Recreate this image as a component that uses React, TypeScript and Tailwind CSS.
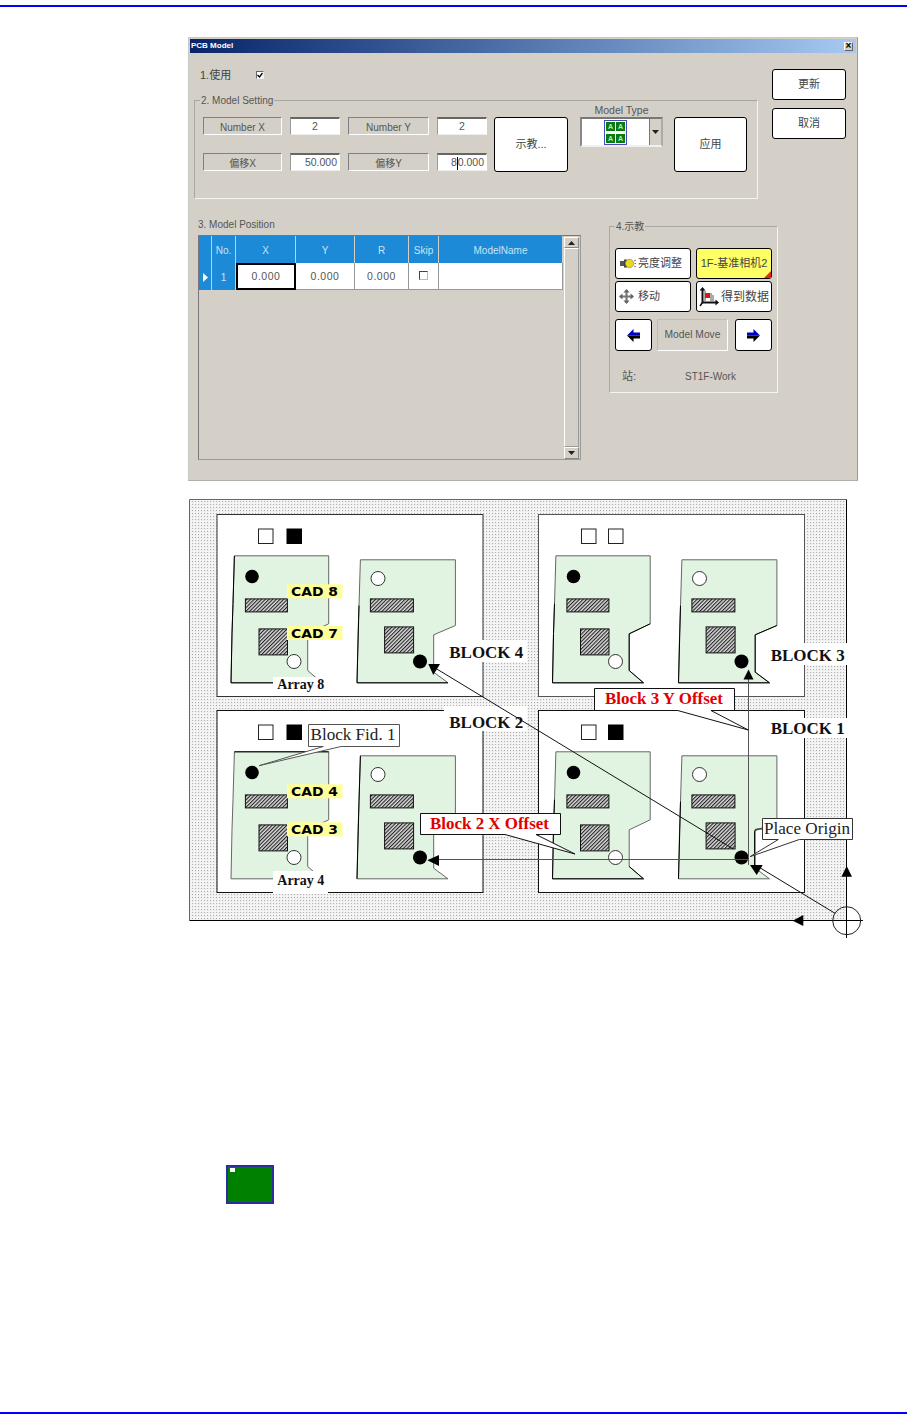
import React from 'react';

// --- Dialog pieces ---
const sunken = 'border border-t-[#808080] border-l-[#808080] border-r-white border-b-white';
const btnBase = 'flex items-center border border-black rounded-[3px] text-[#444] text-[11px]';
const whiteBtn = `${btnBase} justify-center bg-white`;
const iconBtn = `${btnBase} justify-start bg-white`;

const FieldLabel = ({ children }: { children: React.ReactNode }) => (
  <div className={`${sunken} h-[18px] pt-[2px] flex items-center justify-center text-[10px] text-[#555]`}>{children}</div>
);

const FieldInput = ({ children, right }: { children: React.ReactNode; right?: boolean }) => (
  <div
    className={`border border-t-[#666] border-t-2 border-l-[#999] border-r-white border-b-[#eeeeee] bg-white h-[18px] pt-px flex items-center text-[10.5px] text-[#555] ${
      right ? 'justify-end pr-[2px]' : 'justify-center'
    }`}
  >
    {children}
  </div>
);

const Group = ({
  label,
  className,
  children,
}: {
  label: string;
  className: string;
  children: React.ReactNode;
}) => (
  <div className={`relative border border-[#a8a8a0] border-r-[#f4f4f0] border-b-[#f4f4f0] ${className}`}>
    <span className="absolute -top-[7px] left-[5px] bg-[#d4d0c8] px-px leading-[13px] text-[10px] text-[#555]">
      {label}
    </span>
    {children}
  </div>
);

const LampIcon = () => (
  <svg width="16" height="11" viewBox="0 0 16 11" className="ml-[4px] mr-[2px]">
    <rect x="0" y="3" width="6" height="5" fill="#555" />
    <rect x="4" y="1.5" width="3" height="8" fill="#444" />
    <circle cx="9.5" cy="5.5" r="4.2" fill="#e8d820" stroke="#666" strokeWidth="0.5" />
    <path d="M14 3l2-1M14.5 5.5h1.5M14 8l2 1" stroke="#555" strokeWidth="0.8" />
  </svg>
);

const MoveIcon = () => (
  <svg width="15" height="15" viewBox="0 0 17 17" className="ml-[3px] mr-[4px]">
    <path d="M8.5 1v15M1 8.5h15" stroke="#777" strokeWidth="2.4" />
    <path d="M8.5 0l3.5 4H5zM8.5 17l3.5-4H5zM0 8.5l4-3.5v7zM17 8.5l-4-3.5v7z" fill="#666" />
  </svg>
);

const DataIcon = () => (
  <svg width="20" height="20" viewBox="0 0 20 20" className="ml-[2px] mr-[2px] shrink-0">
    <path d="M3.5 2v13.5H18" stroke="#111" strokeWidth="2" fill="none" />
    <path d="M3.5 0l3 3.5h-6zM20 15.5l-3.5-3v6z" fill="#111" />
    <path d="M3.5 15.5L1 19" stroke="#111" strokeWidth="1.5" />
    <path d="M6 4v10M12 6v8M14 8v6" stroke="#555" strokeWidth="1" />
    <rect x="6" y="6" width="5" height="5" fill="#d81818" />
  </svg>
);

const ArrowIcon = ({ left }: { left?: boolean }) => (
  <svg width="13" height="13" viewBox="0 0 13 13" className={left ? '' : '-scale-x-100'}>
    <path d="M0 6.5L6.5 0v3.5H13v3H0z" fill="#0000c0" />
    <path d="M0 6.5L6.5 13V9.5H13v-3H0z" fill="#000" />
  </svg>
);

const ModelThumb = () => (
  <div className="grid grid-cols-[9px_9px] gap-x-px gap-y-[3px] border border-[#4848b8] px-px py-px">
    {[0, 1, 2, 3].map((i) => (
      <div
        key={i}
        className="h-[9px] bg-[#0a7a14] flex items-center justify-center text-[7px] leading-none font-bold text-[#b8f0b8]"
      >
        A
      </div>
    ))}
  </div>
);

const HeaderCell = ({ children }: { children?: React.ReactNode }) => (
  <div className="border-r border-[#d0d0c8] bg-[#1c8ad6] pt-px flex items-center justify-center text-[10px] text-[#c8e4f4]">
    {children}
  </div>
);

const BodyCell = ({ children }: { children?: React.ReactNode }) => (
  <div className="border-r border-b border-[#999] bg-white pt-[2px] flex items-center justify-center text-[10.5px] tracking-[0.5px] text-[#555]">
    {children}
  </div>
);

const Triangle = ({ down }: { down?: boolean }) => (
  <svg width="7" height="4" viewBox="0 0 7 4">
    <path d={down ? 'M0 0h7L3.5 4z' : 'M0 4h7L3.5 0z'} fill="#222" />
  </svg>
);

const Dialog = () => (
  <div className="ml-[188px] w-[670px] h-[444px] bg-[#d4d0c8] border border-[#c8c8c4] border-r-[#999] border-b-[#b0b0a8] p-px flex flex-col font-['Liberation_Sans','Noto_Sans_CJK_SC',sans-serif]">
    {/* Title bar */}
    <div className="h-[14px] shrink-0 bg-gradient-to-r from-[#0a246a] to-[#a6caf0] flex items-center justify-between pr-[3px] pl-px">
      <span className="text-[8px] font-bold text-white">PCB Model</span>
      <div className="w-[9px] h-[9px] bg-[#d4d0c8] border border-[#666] border-t-white border-l-white flex items-center justify-center text-[10px] leading-none font-bold text-black">
        ×
      </div>
    </div>

    {/* Top part: settings and the two buttons at right */}
    <div className="flex pl-[4px] pt-[16px]">
      <div className="w-[564px]">
        <div className="h-[31px] flex items-start pl-[6px]">
          <span className="w-[56px] text-[11px] leading-[12px] text-[#444]">1.使用</span>
          <div className="mt-[2px] w-[8px] h-[8px] bg-white border border-t-[#666] border-l-[#666] border-r-[#eee] border-b-[#eee] flex items-center justify-center">
            <svg width="6" height="6" viewBox="0 0 6 6">
              <path d="M0.5 3l2 2L5.5 1" stroke="#000" strokeWidth="1.3" fill="none" />
            </svg>
          </div>
        </div>
        <Group label="2. Model Setting" className="h-[99px] pl-[8px] pt-[16px]">
          <div className="flex items-start">
            <div className="grid grid-cols-[79px_50px_81px_50px] gap-x-2 gap-y-[18px]">
              <FieldLabel>Number X</FieldLabel>
              <FieldInput>2</FieldInput>
              <FieldLabel>Number Y</FieldLabel>
              <FieldInput>2</FieldInput>
              <FieldLabel>偏移X</FieldLabel>
              <FieldInput right>50.000</FieldInput>
              <FieldLabel>偏移Y</FieldLabel>
              <FieldInput right>
                8<span className="inline-block w-px h-[13px] bg-black" />0.000
              </FieldInput>
            </div>
            <button className={`${whiteBtn} ml-[7px] w-[74px] h-[55px]`}>示教...</button>
            <div className="ml-[12px] w-[83px] -mt-[13px] flex flex-col">
              <div className="h-[13px] text-center text-[10.5px] leading-[12px] text-[#555]">Model Type</div>
              <div className="h-[30px] flex bg-white border-2 border-t-[#777] border-l-[#888] border-r-[#aaa] border-b-[#f0f0f0]">
                <div className="flex-1 flex items-center justify-center">
                  <ModelThumb />
                </div>
                <div className="w-[12px] bg-[#d4d0c8] border-l border-[#777] flex items-center justify-center">
                  <Triangle down />
                </div>
              </div>
            </div>
            <button className={`${whiteBtn} ml-[11px] w-[73px] h-[55px]`}>应用</button>
          </div>
        </Group>
      </div>
      <div className="ml-[14px] w-[74px] flex flex-col gap-2">
        <button className={`${whiteBtn} h-[31px]`}>更新</button>
        <button className={`${whiteBtn} h-[31px]`}>取消</button>
      </div>
    </div>

    {/* Lower part: table and teaching group */}
    <div className="flex pl-[8px] pt-[20px]">
      <div className="w-[383px]">
        <div className="h-[16px] text-[10px] leading-[12px] text-[#555]">3. Model Position</div>
        <div className="h-[225px] border border-[#777] border-r-[#999] border-b-[#999] flex">
          <div className="flex-1">
            <div className="grid grid-cols-[13px_24px_60px_59px_54px_30px_1fr] grid-rows-[27px_27px]">
              <HeaderCell />
              <HeaderCell>No.</HeaderCell>
              <HeaderCell>X</HeaderCell>
              <HeaderCell>Y</HeaderCell>
              <HeaderCell>R</HeaderCell>
              <HeaderCell>Skip</HeaderCell>
              <HeaderCell>ModelName</HeaderCell>
              <HeaderCell>
                <svg width="5" height="9" viewBox="0 0 5 9">
                  <path d="M0 0l5 4.5L0 9z" fill="#fff" />
                </svg>
              </HeaderCell>
              <HeaderCell>1</HeaderCell>
              <div className="border-2 border-black bg-white pt-px flex items-center justify-center text-[10.5px] tracking-[0.5px] text-[#555]">
                0.000
              </div>
              <BodyCell>0.000</BodyCell>
              <BodyCell>0.000</BodyCell>
              <BodyCell>
                <div className="w-[9px] h-[9px] -mt-[3px] bg-white border border-t-[#444] border-l-[#444] border-r-[#bbb] border-b-[#bbb]" />
              </BodyCell>
              <BodyCell />
            </div>
          </div>
          {/* Scrollbar */}
          <div className="w-[17px] flex flex-col items-stretch px-px pt-px">
            <div className="h-[11px] bg-[#d4d0c8] border border-t-white border-l-white border-r-[#888] border-b-[#888] flex items-center justify-center">
              <Triangle />
            </div>
            <div className="flex-1 bg-[#d4d0c8] border border-t-white border-l-white border-r-[#999] border-b-[#999]" />
            <div className="h-[12px] bg-[#d4d0c8] border border-t-white border-l-white border-r-[#888] border-b-[#888] flex items-center justify-center">
              <Triangle down />
            </div>
          </div>
        </div>
      </div>

      <Group label="4.示教" className="ml-[28px] mt-[7px] w-[169px] h-[167px] pl-[5px] pt-[21px]">
        <div className="grid grid-cols-[76px_76px] grid-rows-[31px_31px] gap-x-[5px] gap-y-[2px]">
          <button className={iconBtn}>
            <LampIcon />
            亮度调整
          </button>
          <button className={`${btnBase} justify-center relative bg-[#ffff66] text-[10.5px] whitespace-nowrap`}>
            1F-基准相机2
            <span className="absolute right-0 bottom-0 w-0 h-0 border-l-[7px] border-l-transparent border-b-[7px] border-b-[#d83018]" />
          </button>
          <button className={iconBtn}>
            <MoveIcon />
            移动
          </button>
          <button className={`${iconBtn} text-[12px]`}>
            <DataIcon />
            得到数据
          </button>
        </div>
        <div className="mt-[7px] flex">
          <button className={`${whiteBtn} w-[37px] h-[32px]`}>
            <ArrowIcon left />
          </button>
          <div className="ml-[5px] w-[71px] h-[32px] border border-[#bbb] border-b-white border-r-white flex items-center justify-center text-[10.25px] text-[#555]">
            Model Move
          </div>
          <button className={`${whiteBtn} ml-[7px] w-[37px] h-[32px]`}>
            <ArrowIcon />
          </button>
        </div>
        <div className="mt-[19px] pl-[7px] flex text-[10px] leading-[13px] text-[#555]">
          <span className="w-[63px] text-[11px]">站:</span>
          <span>ST1F-Work</span>
        </div>
      </Group>
    </div>
  </div>
);

// --- Diagram ---
const pcbLeft = '17.4,41.3 111.7,41.3 111.7,109.3 90.7,119.3 90.7,156 105,168.3 14,168.3 15,119 16,89';
const pcbRight = '143.4,45.3 238.4,45.3 238.4,111 216.7,120.3 216.7,157.7 231,168.3 140,168.3 141,121 142,91';

const Block = ({
  x,
  y,
  fid,
  edge,
  dark,
  markX = 41.5,
}: {
  x: number;
  y: number;
  fid: boolean;
  edge: string;
  dark: [string, string];
  markX?: number;
}) => (
  <g transform={`translate(${x} ${y})`}>
    <rect x="0" y="0" width="266" height="182" fill="#fff" stroke={edge} />
    <rect x={markX} y="14.5" width="14.5" height="14.5" fill="#fff" stroke="#222" />
    <rect x="70" y="14.5" width="14.5" height="14.5" fill={fid ? '#000' : '#fff'} stroke={fid ? '#000' : '#222'} />

    <polygon points={pcbLeft} fill="#e1f4e1" stroke="#666" />
    <polygon points={pcbRight} fill="#e1f4e1" stroke="#666" />
    <polyline points={dark[0]} fill="none" stroke="#000" />
    <polyline points={dark[1]} fill="none" stroke="#000" />

    <circle cx="35" cy="62" r="6.8" fill="#000" />
    <rect x="28.4" y="84.4" width="42" height="13" fill="url(#hatch)" stroke="#111" />
    <rect x="42" y="114.4" width="28.5" height="26" fill="url(#hatch)" stroke="#111" />
    <circle cx="77" cy="147" r="7" fill="#fff" stroke="#333" />

    <circle cx="161" cy="64" r="7" fill="#fff" stroke="#333" />
    <rect x="153.4" y="84.4" width="43" height="13" fill="url(#hatch)" stroke="#111" />
    <rect x="167.6" y="112.4" width="29" height="26" fill="url(#hatch)" stroke="#111" />
    <circle cx="203" cy="147" r="7" fill="#000" />
  </g>
);

const CadTag = ({ y, label }: { y: number; label: string }) => (
  <g>
    <rect x="287" y={y} width="55.5" height="14" fill="#ffff99" />
    <text
      x="291"
      y={y + 11.5}
      textLength="47"
      lengthAdjust="spacingAndGlyphs"
      className="font-['DejaVu_Sans',sans-serif] font-bold text-[13px] fill-black"
    >
      {label}
    </text>
  </g>
);

const serifBold = "font-['Liberation_Serif',serif] font-bold text-[16.5px]";
const serifPlain = "font-['Liberation_Serif',serif] text-[17.5px]";

const blockNames = [
  { label: 'BLOCK 4', x: 449.3, y: 657.7, bg: [443, 640, 84, 22] },
  { label: 'BLOCK 3', x: 770.7, y: 660.7, bg: [760, 643, 88, 22] },
  { label: 'BLOCK 2', x: 449.3, y: 727.7, bg: [444, 706, 83, 25] },
  { label: 'BLOCK 1', x: 770.7, y: 734.3, bg: [757, 718, 91, 20] },
];

const Diagram = () => (
  <svg width="680" height="445" viewBox="189 499 680 445" className="ml-[189px] mt-[18px] block">
    <defs>
      <pattern id="stipple" width="3" height="3" patternUnits="userSpaceOnUse">
        <rect width="3" height="3" fill="#f0f0f0" />
        <rect width="1" height="1" fill="#b0b0b0" />
        <rect x="2" y="2" width="1" height="1" fill="#fff" />
      </pattern>
      <pattern id="hatch" width="2.6" height="2.6" patternUnits="userSpaceOnUse" patternTransform="rotate(-45)">
        <rect width="2.6" height="2.6" fill="#dcdcdc" />
        <rect width="2.6" height="1.1" fill="#222" />
      </pattern>
    </defs>

    {/* Panel */}
    <rect x="189.5" y="499.5" width="657" height="421" fill="url(#stipple)" />
    <path d="M189.5 920.5V499.5H846.5" fill="none" stroke="#666" />
    <path d="M189.5 920.5H863M846.5 499.5V938" fill="none" stroke="#000" />

    <Block
      x={217}
      y={514.5}
      fid
      edge="#333"
      dark={['17.4,41.3 16,89 15,119 14,168.3 105,168.3', '142,91 140,168.3 231,168.3']}
    />
    <Block
      x={538.5}
      y={514.5}
      fid={false}
      edge="#555"
      markX={43}
      dark={['16,89 15,119 14,168.3 105,168.3 90.7,156 90.7,119.3 111.7,109.3', '142,91 140,168.3 231,168.3 216.7,157.7 216.7,120.3 238.4,111']}
    />
    <Block x={217} y={710.5} fid edge="#111" dark={['17.4,41.3 111.7,41.3', '143.4,45.3 142,91 140,168.3']} />
    <Block
      x={538.5}
      y={710.5}
      fid
      edge="#111"
      markX={43}
      dark={['16,89 15,119 14,168.3 105,168.3 90.7,156', '142,91 140,168.3']}
    />

    <CadTag y={584.3} label="CAD 8" />
    <CadTag y={626} label="CAD 7" />
    <CadTag y={784.3} label="CAD 4" />
    <CadTag y={822.3} label="CAD 3" />

    {/* Array labels */}
    <rect x="273" y="677" width="55" height="19" fill="#fff" />
    <rect x="273" y="871" width="55" height="23" fill="#fff" />
    <text
      x="277.3"
      y="689"
      textLength="47"
      lengthAdjust="spacingAndGlyphs"
      className="font-['Liberation_Serif',serif] font-bold text-[14px] fill-[#111]"
    >
      Array 8
    </text>
    <text
      x="277.3"
      y="885"
      textLength="47"
      lengthAdjust="spacingAndGlyphs"
      className="font-['Liberation_Serif',serif] font-bold text-[14px] fill-[#111]"
    >
      Array 4
    </text>

    {/* Block names with their white patches */}
    {blockNames.map((b) => (
      <g key={b.label}>
        <rect x={b.bg[0]} y={b.bg[1]} width={b.bg[2]} height={b.bg[3]} fill="#fff" />
        <text x={b.x} y={b.y} textLength="74" lengthAdjust="spacingAndGlyphs" className={`${serifBold} fill-[#111]`}>
          {b.label}
        </text>
      </g>
    ))}

    {/* Offset arrows */}
    <path d="M436 668.5L733.3 849" stroke="#111" fill="none" />
    <path d="M439 859.5H748.5M748.5 679V865" stroke="#555" fill="none" />
    <path d="M835 913.3L757 866" stroke="#111" fill="none" />
    <path d="M762 829H757Q754.5 829 754.5 832V866" stroke="#111" fill="none" />
    <path d="M428.3 664H440L433.3 675z" fill="#000" />
    <path d="M427.3 860.3L439 855V866z" fill="#000" />
    <path d="M748.5 669.5L753.5 679.5H743.5z" fill="#000" />
    <path d="M750 865H762.7L756.7 875z" fill="#000" />

    {/* Origin mark */}
    <circle cx="846.7" cy="920.7" r="14" fill="none" stroke="#222" />
    <path d="M846.7 866L852 876.7H841.4z" fill="#000" />
    <path d="M792.7 920.7L803.3 915V926z" fill="#000" />

    {/* Callouts */}
    <path d="M677.7 710.5H594.5V688.5H734.5V710.5H711L748.3 730z" fill="#fff" stroke="#111" />
    <text x="605" y="704.3" textLength="118" lengthAdjust="spacingAndGlyphs" className={`${serifBold} fill-[#e00000]`}>
      Block 3 Y Offset
    </text>

    <path d="M323.3 746.5H308.5V724.5H399.5V746.5H341L259 765.7z" fill="#fff" stroke="#555" />
    <text x="310.5" y="740" textLength="85" lengthAdjust="spacingAndGlyphs" className={`${serifPlain} fill-[#222]`}>
      Block Fid. 1
    </text>

    <path d="M505 834.5H420.5V813.5H560.5V834.5H536L575 854z" fill="#fff" stroke="#111" />
    <text x="430" y="829" textLength="119" lengthAdjust="spacingAndGlyphs" className={`${serifBold} fill-[#e00000]`}>
      Block 2 X Offset
    </text>

    <path d="M778.3 839.5H762.5V818.5H852.5V839.5H799.3L750 856.7z" fill="#fff" stroke="#333" />
    <text x="764" y="834" textLength="86" lengthAdjust="spacingAndGlyphs" className={`${serifPlain} fill-[#222]`}>
      Place Origin
    </text>
  </svg>
);

const App: React.FC = () => {
  return (
    <div className="w-[907px] h-[1424px] bg-white overflow-hidden flex flex-col pt-[5px] pb-[10px]">
      <div className="h-[2px] bg-[#0000ff] shrink-0" />
      <div className="mt-[30px]">
        <Dialog />
      </div>
      <Diagram />
      <div className="ml-[226px] mt-[221px] w-[48px] h-[39px] bg-[#008000] border-2 border-[#2a2fa0] shrink-0 pl-[2px] pt-px">
        <div className="w-[5px] h-[4px] bg-white" />
      </div>
      <div className="mt-auto h-[2px] bg-[#0000ff] shrink-0" />
    </div>
  );
};

export default App;
